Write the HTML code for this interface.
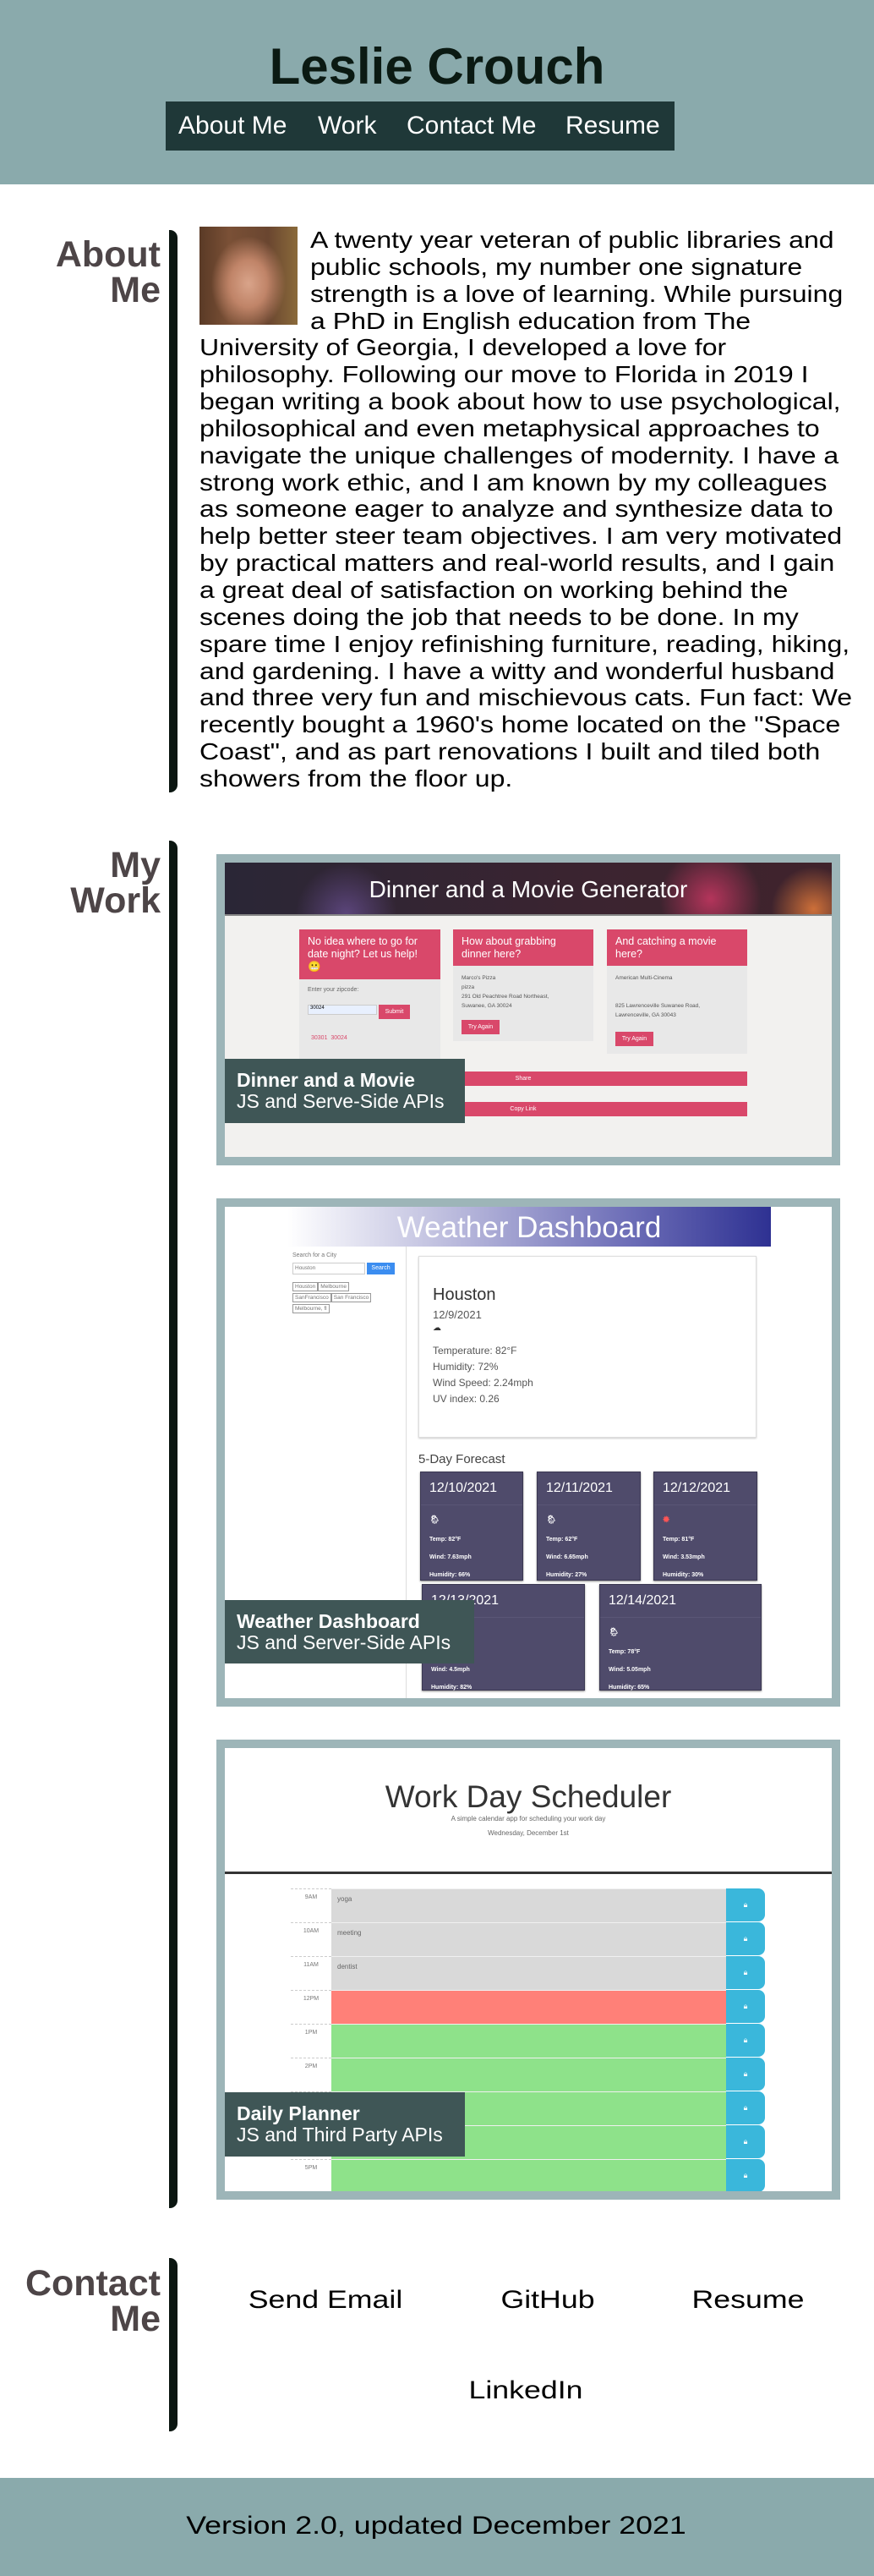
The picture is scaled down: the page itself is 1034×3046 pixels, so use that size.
<!DOCTYPE html>
<html><head><meta charset="utf-8"><style>
*{margin:0;padding:0;box-sizing:border-box}
body{width:1034px;height:3046px;position:relative;background:#fff;font-family:"Liberation Sans",Arial,sans-serif;overflow:hidden;color:#000}
.a{position:absolute}
.hdr{left:0;top:0;width:1034px;height:218px;background:#8aaaac}
h1{position:absolute;left:0;width:1034px;top:44px;text-align:center;font-size:60px;font-weight:bold;color:#0b1a13;line-height:70px}
.nav{left:196px;top:120px;width:602px;height:58px;background:#1f3838;color:#fff;font-size:30px;line-height:58px;white-space:nowrap}
.nav span{position:absolute;top:0}
.sh{color:#4d4547;font-weight:bold;font-size:43px;line-height:42px;text-align:right;width:190px;left:0}
.bar{background:#0b1611;width:10px;left:200px;border-radius:0 9px 9px 0}
.about{left:236px;top:268px;width:790px;font-size:28px;line-height:31.85px;white-space:nowrap;transform:scaleX(1.144);transform-origin:0 0}
.photo{left:236px;top:268px;width:116px;height:116px;background:radial-gradient(ellipse 38% 48% at 50% 58%,#d9a48a 0,#c08468 50%,rgba(110,70,45,0) 100%),linear-gradient(90deg,#5a3a26,#7a5036 30%,#6a4630 70%,#8a6a3a)}
.box{border:10px solid #9db5b8;left:256px;width:738px;overflow:hidden}
.in{position:relative;width:100%;height:100%;overflow:hidden}
.cap{position:absolute;left:0;background:#3f5656;color:#fff;font-size:23px;line-height:25px;padding:13px 0 0 14px}
.cap b{display:block}
.pk{background:#d9486a;color:#fff}
.wc{position:absolute;background:#4f4b6b;color:#fff;border:1px solid #3b3852;box-shadow:0 1px 2px #888}
.wc .d{font-size:16px;padding:10px 10px;border-bottom:1px solid #5a5676}
.wc p{font-size:7px;font-weight:bold;margin:0 10px 14px}
.row{position:absolute;left:78px;width:561px;height:40px}
.row .t{position:absolute;left:0;width:48px;height:40px;border-top:1px dashed #ccc;font-size:7px;color:#777;text-align:center;padding-top:6px}
.row .x{position:absolute;left:48px;width:467px;height:40px;border-top:1px solid #f0f0f0;font-size:8px;color:#666;padding:7px}
.row .b{position:absolute;left:515px;width:46px;height:39px;background:#3ab7db;border-radius:0 8px 8px 0;color:#fff;font-size:9px;text-align:center;line-height:39px}
.ct{font-size:30px;line-height:34px;width:400px;text-align:center;white-space:nowrap}
</style></head><body>
<div class="a hdr"></div>
<h1>Leslie Crouch</h1>
<div class="a nav"><span style="left:15px">About Me</span><span style="left:180px">Work</span><span style="left:285px">Contact Me</span><span style="left:473px">Resume</span></div>

<div class="a sh" style="top:280px">About<br>Me</div>
<div class="a bar" style="top:272px;height:665px"></div>
<div class="a photo"></div>
<div class="a about"><span style="display:inline-block;width:114.5px"></span>A twenty year veteran of public libraries and<br><span style="display:inline-block;width:114.5px"></span>public schools, my number one signature<br><span style="display:inline-block;width:114.5px"></span>strength is a love of learning. While pursuing<br><span style="display:inline-block;width:114.5px"></span>a PhD in English education from The<br>University of Georgia, I developed a love for<br>philosophy. Following our move to Florida in 2019 I<br>began writing a book about how to use psychological,<br>philosophical and even metaphysical approaches to<br>navigate the unique challenges of modernity. I have a<br>strong work ethic, and I am known by my colleagues<br>as someone eager to analyze and synthesize data to<br>help better steer team objectives. I am very motivated<br>by practical matters and real-world results, and I gain<br>a great deal of satisfaction on working behind the<br>scenes doing the job that needs to be done. In my<br>spare time I enjoy refinishing furniture, reading, hiking,<br>and gardening. I have a witty and wonderful husband<br>and three very fun and mischievous cats. Fun fact: We<br>recently bought a 1960's home located on the "Space<br>Coast", and as part renovations I built and tiled both<br>showers from the floor up.</div>

<div class="a sh" style="top:1002px">My<br>Work</div>
<div class="a bar" style="top:994px;height:1617px"></div>

<!-- Box 1 -->
<div class="a box" style="top:1010px;height:368px"><div class="in" style="background:#f2f1ef">
<div class="a" style="left:0;top:0;width:718px;height:63px;background:radial-gradient(circle at 80% 70%,rgba(230,60,110,.7) 0,rgba(230,60,110,0) 60px),radial-gradient(circle at 97% 90%,rgba(240,130,60,.8) 0,rgba(240,130,60,0) 50px),radial-gradient(circle at 20% 100%,rgba(120,90,170,.6) 0,rgba(120,90,170,0) 60px),linear-gradient(90deg,#2a2636,#3b2430 60%,#40232c);border-bottom:2px solid #888"></div>
<div class="a" style="left:0;width:718px;top:15px;text-align:center;color:#fff;font-size:28px;line-height:34px">Dinner and a Movie Generator</div>
<div class="a" style="left:88px;top:79px;width:167px;height:153px;background:#e8e8e8"></div>
<div class="a pk" style="left:88px;top:79px;width:167px;height:59px;font-size:12.5px;line-height:15px;padding:7px 10px">No idea where to go for date night? Let us help!<br>😬</div>
<div class="a" style="left:98px;top:147px;font-size:7px;color:#666">Enter your zipcode:</div>
<div class="a" style="left:98px;top:168px;width:82px;height:12px;background:#e8f0fe;border:1px solid #ccc;font-size:6px;padding-left:2px">30024</div>
<div class="a pk" style="left:182px;top:168px;width:37px;height:17px;font-size:7px;text-align:center;line-height:17px">Submit</div>
<div class="a" style="left:102px;top:204px;font-size:7px;color:#d9486a">30301 &nbsp;30024</div>
<div class="a" style="left:270px;top:79px;width:166px;height:132px;background:#e8e8e8"></div>
<div class="a pk" style="left:270px;top:79px;width:166px;height:43px;font-size:12.5px;line-height:15px;padding:7px 10px">How about grabbing dinner here?</div>
<div class="a" style="left:280px;top:131px;font-size:6.5px;line-height:11px;color:#555">Marco's Pizza<br>pizza<br>291 Old Peachtree Road Northeast,<br>Suwanee, GA 30024</div>
<div class="a pk" style="left:280px;top:186px;width:45px;height:17px;font-size:7px;text-align:center;line-height:17px">Try Again</div>
<div class="a" style="left:452px;top:79px;width:166px;height:147px;background:#e8e8e8"></div>
<div class="a pk" style="left:452px;top:79px;width:166px;height:43px;font-size:12.5px;line-height:15px;padding:7px 10px">And catching a movie here?</div>
<div class="a" style="left:462px;top:131px;font-size:6.5px;line-height:11px;color:#555">American Multi-Cinema<br><br><br>825 Lawrenceville Suwanee Road,<br>Lawrenceville, GA 30043</div>
<div class="a pk" style="left:462px;top:200px;width:45px;height:17px;font-size:7px;text-align:center;line-height:17px">Try Again</div>
<div class="a pk" style="left:88px;top:247px;width:530px;height:17px;font-size:7px;text-align:center;line-height:17px">Share</div>
<div class="a pk" style="left:88px;top:283px;width:530px;height:17px;font-size:7px;text-align:center;line-height:17px">Copy Link</div>
<div class="cap" style="top:232px;width:284px;height:76px"><b>Dinner and a Movie</b>JS and Serve-Side APIs</div>
</div></div>

<!-- Box 2 -->
<div class="a box" style="top:1417px;height:601px"><div class="in" style="background:#fff">
<div class="a" style="left:74px;top:0;width:572px;height:47px;background:linear-gradient(90deg,#fff,#b9b9dc 35%,#6e6fb8 70%,#2e3192)"></div>
<div class="a" style="left:74px;width:572px;top:5px;text-align:center;color:#fff;font-size:35px;line-height:40px">Weather Dashboard</div>
<div class="a" style="left:214px;top:47px;width:1px;height:540px;background:#ddd"></div>
<div class="a" style="left:80px;top:54px;font-size:7px;color:#777">Search for a City</div>
<div class="a" style="left:80px;top:66px;width:86px;height:14px;border:1px solid #ccc;font-size:6.5px;color:#777;padding:2px">Houston</div>
<div class="a" style="left:168px;top:66px;width:33px;height:14px;background:#3b8df0;color:#fff;font-size:7px;text-align:center;line-height:14px">Search</div>
<div class="a" style="left:80px;top:88px;font-size:6.5px;color:#777;line-height:13px;width:100px"><span style="border:1px solid #999;padding:1px 2px">Houston</span><span style="border:1px solid #999;padding:1px 2px">Melbourne</span><br><span style="border:1px solid #999;padding:1px 2px;white-space:nowrap">SanFrancisco</span><span style="border:1px solid #999;padding:1px 2px;white-space:nowrap">San Francisco</span><br><span style="border:1px solid #999;padding:1px 2px">Melbourne, fl</span></div>
<div class="a" style="left:229px;top:58px;width:400px;height:215px;border:1px solid #ddd;box-shadow:0 1px 2px #ccc"></div>
<div class="a" style="left:246px;top:93px;font-size:20px;color:#333">Houston</div>
<div class="a" style="left:246px;top:120px;font-size:13px;color:#555">12/9/2021</div>
<div class="a" style="left:246px;top:138px;font-size:10px;color:#333">☁</div>
<div class="a" style="left:246px;top:161px;font-size:12px;line-height:19px;color:#555">Temperature: 82°F<br>Humidity: 72%<br>Wind Speed: 2.24mph<br>UV index: 0.26</div>
<div class="a" style="left:229px;top:290px;font-size:15px;color:#444">5-Day Forecast</div>
<div class="wc" style="left:231px;top:313px;width:122px;height:129px"><div class="d">12/10/2021</div><p style="margin-top:12px;font-size:10px">🌦</p><p>Temp: 82°F</p><p>Wind: 7.63mph</p><p>Humidity: 66%</p></div>
<div class="wc" style="left:369px;top:313px;width:123px;height:129px"><div class="d">12/11/2021</div><p style="margin-top:12px;font-size:10px">🌦</p><p>Temp: 62°F</p><p>Wind: 6.65mph</p><p>Humidity: 27%</p></div>
<div class="wc" style="left:507px;top:313px;width:123px;height:129px"><div class="d">12/12/2021</div><p style="margin-top:12px;font-size:10px;color:#f55">✹</p><p>Temp: 81°F</p><p>Wind: 3.53mph</p><p>Humidity: 30%</p></div>
<div class="wc" style="left:233px;top:446px;width:193px;height:126px"><div class="d">12/13/2021</div><p style="margin-top:12px;font-size:10px">🌦</p><p>Temp: 79°F</p><p>Wind: 4.5mph</p><p>Humidity: 82%</p></div>
<div class="wc" style="left:443px;top:446px;width:192px;height:126px"><div class="d">12/14/2021</div><p style="margin-top:12px;font-size:10px">🌦</p><p>Temp: 78°F</p><p>Wind: 5.05mph</p><p>Humidity: 65%</p></div>
<div class="cap" style="top:465px;width:295px;height:75px"><b>Weather Dashboard</b>JS and Server-Side APIs</div>
</div></div>

<!-- Box 3 -->
<div class="a box" style="top:2057px;height:544px"><div class="in" style="background:#fff">
<div class="a" style="left:0;width:718px;top:36px;text-align:center;font-size:37px;color:#333;line-height:44px">Work Day Scheduler</div>
<div class="a" style="left:0;width:718px;top:79px;text-align:center;font-size:8px;color:#666">A simple calendar app for scheduling your work day</div>
<div class="a" style="left:0;width:718px;top:96px;text-align:center;font-size:8px;color:#666">Wednesday, December 1st</div>
<div class="a" style="left:0;top:146px;width:718px;height:3px;background:#333"></div>
<div class="row" style="top:166px"><div class="t">9AM</div><div class="x" style="background:#d9d9d9">yoga</div><div class="b">🔒︎</div></div>
<div class="row" style="top:206px"><div class="t">10AM</div><div class="x" style="background:#d9d9d9">meeting</div><div class="b">🔒︎</div></div>
<div class="row" style="top:246px"><div class="t">11AM</div><div class="x" style="background:#d9d9d9">dentist</div><div class="b">🔒︎</div></div>
<div class="row" style="top:286px"><div class="t">12PM</div><div class="x" style="background:#ff8078"></div><div class="b">🔒︎</div></div>
<div class="row" style="top:326px"><div class="t">1PM</div><div class="x" style="background:#8ee28a"></div><div class="b">🔒︎</div></div>
<div class="row" style="top:366px"><div class="t">2PM</div><div class="x" style="background:#8ee28a"></div><div class="b">🔒︎</div></div>
<div class="row" style="top:406px"><div class="t">3PM</div><div class="x" style="background:#8ee28a"></div><div class="b">🔒︎</div></div>
<div class="row" style="top:446px"><div class="t">4PM</div><div class="x" style="background:#8ee28a"></div><div class="b">🔒︎</div></div>
<div class="row" style="top:486px"><div class="t">5PM</div><div class="x" style="background:#8ee28a"></div><div class="b">🔒︎</div></div>
<div class="cap" style="top:407px;width:284px;height:76px"><b>Daily Planner</b>JS and Third Party APIs</div>
</div></div>

<div class="a sh" style="top:2679px">Contact<br>Me</div>
<div class="a bar" style="top:2670px;height:205px"></div>
<div class="a ct" style="left:185px;top:2703px;transform:scaleX(1.19)">Send Email</div>
<div class="a ct" style="left:448px;top:2703px;transform:scaleX(1.19)">GitHub</div>
<div class="a ct" style="left:685px;top:2703px;transform:scaleX(1.19)">Resume</div>
<div class="a ct" style="left:422px;top:2810px;transform:scaleX(1.19)">LinkedIn</div>

<div class="a" style="left:0;top:2930px;width:1034px;height:116px;background:#8aaaac"></div>
<div class="a ct" style="left:0;width:1032px;top:2970px;transform:scaleX(1.19);transform-origin:516px 0">Version 2.0, updated December 2021</div>
</body></html>
